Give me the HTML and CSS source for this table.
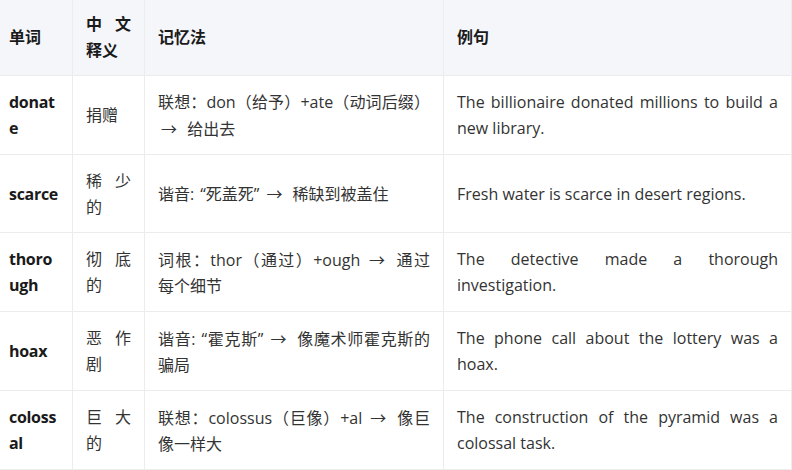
FILE: index.html
```html
<!DOCTYPE html>
<html lang="zh-CN">
<head>
<meta charset="utf-8">
<title>单词记忆表</title>
<link rel="stylesheet" href="styles.css">
</head>
<body>
<table class="vocab">
  <colgroup>
    <col class="c-word">
    <col class="c-mean">
    <col class="c-memo">
    <col class="c-ex">
  </colgroup>
  <thead>
    <tr>
      <th>单词</th>
      <th>中文释义</th>
      <th>记忆法</th>
      <th>例句</th>
    </tr>
  </thead>
  <tbody>
    <tr>
      <td class="word">donate</td>
      <td class="cn">捐赠</td>
      <td>联想：don（给予）+ate（动词后缀）<span class="arr">→</span> 给出去</td>
      <td>The billionaire donated millions to build a new library.</td>
    </tr>
    <tr>
      <td class="word">scarce</td>
      <td class="cn">稀少的</td>
      <td>谐音:<span class="qo">“</span>死盖死<span class="qc">”</span><span class="arr">→</span> 稀缺到被盖住</td>
      <td>Fresh water is scarce in desert regions.</td>
    </tr>
    <tr>
      <td class="word">thorough</td>
      <td class="cn">彻底的</td>
      <td>词根：thor（通过）+ough <span class="arr">→</span> 通过每个细节</td>
      <td>The detective made a thorough investigation.</td>
    </tr>
    <tr>
      <td class="word">hoax</td>
      <td class="cn">恶作剧</td>
      <td>谐音:<span class="qo">“</span>霍克斯<span class="qc">”</span><span class="arr">→</span> 像魔术师霍克斯的骗局</td>
      <td>The phone call about the lottery was a hoax.</td>
    </tr>
    <tr>
      <td class="word">colossal</td>
      <td class="cn">巨大的</td>
      <td>联想：colossus（巨像）+al <span class="arr">→</span> 像巨像一样大</td>
      <td>The construction of the pyramid was a colossal task.</td>
    </tr>
  </tbody>
</table>
</body>
</html>
```
FILE: styles.css
```css
html, body {
  margin: 0;
  padding: 0;
  background: #ffffff;
}

body {
  font-family: "Open Sans", "Noto Sans CJK SC", sans-serif;
  font-size: 16px;
  color: #333333;
  overflow: hidden;
}

.vocab {
  border-collapse: collapse;
  table-layout: fixed;
  width: 796px;
  margin-left: -5px;
  margin-top: -1px;
}

.c-word { width: 77px; }
.c-mean { width: 72px; }
.c-memo { width: 299px; }
.c-ex { width: 348px; }

.vocab th,
.vocab td {
  border: 1px solid #ececec;
  padding: 12.5px 13px;
  line-height: 26px;
  vertical-align: middle;
  text-align: justify;
}

.vocab th {
  background: #f5f6fa;
  color: #1a1a1a;
  font-weight: 700;
  padding-top: 11px;
  padding-bottom: 12px;
}

.vocab td.word {
  font-weight: 700;
  color: #1a1a1a;
  letter-spacing: -0.3px;
  word-break: break-all;
}

.qo {
  margin-left: 6px;
}

.qc {
  margin-right: 4px;
}

.arr {
  font-family: "Noto Sans CJK SC", sans-serif;
  margin-left: 3px;
  margin-right: 6px;
}
```
